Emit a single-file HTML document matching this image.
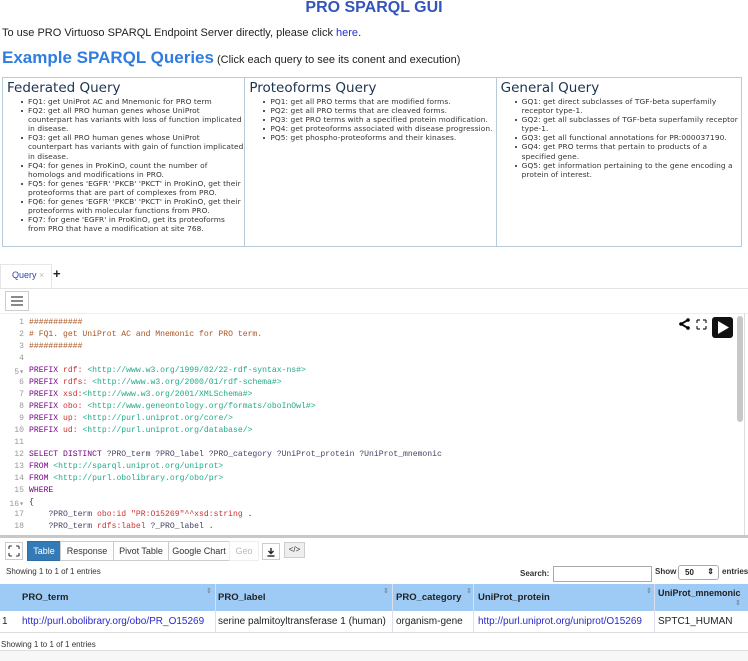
<!DOCTYPE html>
<html><head><meta charset="utf-8">
<style>
*{box-sizing:border-box;margin:0;padding:0}
body{width:748px;height:661px;overflow:hidden;background:#fff;font-family:"Liberation Sans",Arial,sans-serif;color:#222;position:relative}
.a{position:absolute;white-space:nowrap}
h1{position:absolute;left:0;width:748px;top:-1px;text-align:center;font-size:16px;color:#3355bb;font-weight:bold}
.qbox{position:absolute;left:2px;top:77px;width:740px;height:170px;border:1px solid #b7cad9;display:flex}
.col{border-right:1px solid #b7cad9;padding:2px 4px;font-family:"DejaVu Sans",Verdana,sans-serif;overflow:hidden}
.col:last-child{border-right:none}
.col h3{font-weight:normal;font-size:13.5px;color:#1b3350;line-height:16px;margin-bottom:1px}
.col ul{list-style:none;padding-left:21px;font-size:7.4px;letter-spacing:0.08px;line-height:9.1px;color:#333;white-space:nowrap}
.col li{position:relative}
.col li:before{content:"";position:absolute;left:-7px;top:4px;width:2px;height:2px;background:#555}
.code{position:absolute;left:0;top:313px;width:737px;height:223px;font-family:"Liberation Mono",monospace;font-size:8.1px}
.ln{position:absolute;left:0;width:24px;text-align:right;color:#999}
.cl{position:absolute;left:29px;color:#333}
.k{color:#708}.p{color:#c33}.u{color:#2a8}.c{color:#a52}.v{color:#446}.s{color:#c33}
.btn{position:absolute;border:1px solid #ccc;background:#fff;font-size:9px;text-align:center;color:#333}
.th{position:absolute;top:592px;font-size:9.5px;font-weight:bold;white-space:nowrap}
</style></head><body>
<h1>PRO SPARQL GUI</h1>
<div class="a" style="left:2px;top:27px;font-size:11px;color:#222">To use PRO Virtuoso SPARQL Endpoint Server directly, please click <span style="color:#2233cc">here</span>.</div>
<div class="a" style="left:2px;top:48px;font-size:11px"><span style="font-size:17px;font-weight:bold;color:#2f7de1">Example SPARQL Queries</span> (Click each query to see its conent and execution)</div>
<div class="qbox">
<div class="col" style="width:243px"><h3>Federated Query</h3><ul>
<li>FQ1: get UniProt AC and Mnemonic for PRO term</li>
<li>FQ2: get all PRO human genes whose UniProt<br>counterpart has variants with loss of function implicated<br>in disease.</li>
<li>FQ3: get all PRO human genes whose UniProt<br>counterpart has variants with gain of function implicated<br>in disease.</li>
<li>FQ4: for genes in ProKinO, count the number of<br>homologs and modifications in PRO.</li>
<li>FQ5: for genes 'EGFR' 'PKCB' 'PKCT' in ProKinO, get their<br>proteoforms that are part of complexes from PRO.</li>
<li>FQ6: for genes 'EGFR' 'PKCB' 'PKCT' in ProKinO, get their<br>proteoforms with molecular functions from PRO.</li>
<li>FQ7: for gene 'EGFR' in ProKinO, get its proteoforms<br>from PRO that have a modification at site 768.</li></ul></div>
<div class="col" style="width:252px"><h3>Proteoforms Query</h3><ul>
<li>PQ1: get all PRO terms that are modified forms.</li>
<li>PQ2: get all PRO terms that are cleaved forms.</li>
<li>PQ3: get PRO terms with a specified protein modification.</li>
<li>PQ4: get proteoforms associated with disease progression.</li>
<li>PQ5: get phospho-proteoforms and their kinases.</li></ul></div>
<div class="col" style="width:245px"><h3>General Query</h3><ul>
<li>GQ1: get direct subclasses of TGF-beta superfamily<br>receptor type-1.</li>
<li>GQ2: get all subclasses of TGF-beta superfamily receptor<br>type-1.</li>
<li>GQ3: get all functional annotations for PR:000037190.</li>
<li>GQ4: get PRO terms that pertain to products of a<br>specified gene.</li>
<li>GQ5: get information pertaining to the gene encoding a<br>protein of interest.</li></ul></div>
</div>
<div class="a" style="left:0;top:264px;width:52px;height:25px;border:1px solid #e6e6e6;border-bottom:none;background:#fff"></div>
<div class="a" style="left:12px;top:270px;font-size:9px;color:#3344aa">Query <span style="color:#bbb">×</span></div>
<div class="a" style="left:53px;top:266px;font-size:13px;font-weight:bold">+</div>
<div class="a" style="left:0;top:288px;width:748px;height:1px;background:#e3e3e3"></div>
<div class="btn" style="left:5px;top:291px;width:24px;height:20px"><svg width="14" height="10" viewBox="0 0 14 10" style="margin-top:4px"><path d="M1 1H13M1 5H13M1 9H13" stroke="#444" stroke-width="1.3"/></svg></div>
<div class="a" style="left:0;top:313px;width:748px;height:1px;background:#eee"></div>
<div class="code">
<div class="ln" style="top:5px">1</div><div class="cl c" style="top:5px">###########</div>
<div class="ln" style="top:17px">2</div><div class="cl c" style="top:17px"># FQ1. get UniProt AC and Mnemonic for PRO term.</div>
<div class="ln" style="top:29px">3</div><div class="cl c" style="top:29px">###########</div>
<div class="ln" style="top:41px">4</div>
<div class="ln" style="top:53px">5▾</div><div class="cl" style="top:53px"><span class="k">PREFIX</span> <span class="p">rdf:</span> <span class="u">&lt;http://www.w3.org/1999/02/22-rdf-syntax-ns#&gt;</span></div>
<div class="ln" style="top:65px">6</div><div class="cl" style="top:65px"><span class="k">PREFIX</span> <span class="p">rdfs:</span> <span class="u">&lt;http://www.w3.org/2000/01/rdf-schema#&gt;</span></div>
<div class="ln" style="top:77px">7</div><div class="cl" style="top:77px"><span class="k">PREFIX</span> <span class="p">xsd:</span><span class="u">&lt;http://www.w3.org/2001/XMLSchema#&gt;</span></div>
<div class="ln" style="top:89px">8</div><div class="cl" style="top:89px"><span class="k">PREFIX</span> <span class="p">obo:</span> <span class="u">&lt;http://www.geneontology.org/formats/oboInOwl#&gt;</span></div>
<div class="ln" style="top:101px">9</div><div class="cl" style="top:101px"><span class="k">PREFIX</span> <span class="p">up:</span> <span class="u">&lt;http://purl.uniprot.org/core/&gt;</span></div>
<div class="ln" style="top:113px">10</div><div class="cl" style="top:113px"><span class="k">PREFIX</span> <span class="p">ud:</span> <span class="u">&lt;http://purl.uniprot.org/database/&gt;</span></div>
<div class="ln" style="top:125px">11</div>
<div class="ln" style="top:137px">12</div><div class="cl" style="top:137px"><span class="k">SELECT DISTINCT</span> <span class="v">?PRO_term ?PRO_label ?PRO_category ?UniProt_protein ?UniProt_mnemonic</span></div>
<div class="ln" style="top:149px">13</div><div class="cl" style="top:149px"><span class="k">FROM</span> <span class="u">&lt;http://sparql.uniprot.org/uniprot&gt;</span></div>
<div class="ln" style="top:161px">14</div><div class="cl" style="top:161px"><span class="k">FROM</span> <span class="u">&lt;http://purl.obolibrary.org/obo/pr&gt;</span></div>
<div class="ln" style="top:173px">15</div><div class="cl k" style="top:173px">WHERE</div>
<div class="ln" style="top:185px">16▾</div><div class="cl" style="top:185px">{</div>
<div class="ln" style="top:197px">17</div><div class="cl" style="top:197px">&nbsp;&nbsp;&nbsp;&nbsp;<span class="v">?PRO_term</span> <span class="p">obo:id</span> <span class="s">"PR:O15269"^^xsd:string</span> .</div>
<div class="ln" style="top:209px">18</div><div class="cl" style="top:209px">&nbsp;&nbsp;&nbsp;&nbsp;<span class="v">?PRO_term</span> <span class="p">rdfs:label</span> <span class="v">?_PRO_label</span> .</div>
</div>
<svg class="a" style="left:676px;top:317px" width="60" height="22" viewBox="0 0 60 22">
<path d="M12 3L5 7L12 11" stroke="#111" stroke-width="2" fill="none"/><circle cx="12" cy="3" r="1.8"/><circle cx="5" cy="7" r="1.8"/><circle cx="12" cy="11" r="1.8"/>
<path d="M21 3h3M21 3v3M30 3h-3M30 3v3M21 12h3M21 12v-3M30 12h-3M30 12v-3" stroke="#222" stroke-width="1.2" fill="none"/>
<rect x="36" y="0" width="21" height="21" rx="3" fill="#111"/><path d="M42 4L53 10.5L42 17Z" fill="#fff"/>
</svg>
<div class="a" style="left:737px;top:316px;width:6px;height:106px;background:#c8c8c8;border-radius:3px"></div>
<div class="a" style="left:744px;top:313px;width:1px;height:223px;background:#ddd"></div>
<div class="a" style="left:0;top:535px;width:748px;height:3px;background:#c8c8c8"></div>
<div class="btn" style="left:5px;top:542px;width:18px;height:18px"><svg width="12" height="12" viewBox="0 0 12 12" style="margin-top:2px"><path d="M1 1h3M1 1v3M11 1h-3M11 1v3M1 11h3M1 11v-3M11 11h-3M11 11v-3" stroke="#333" stroke-width="1.1" fill="none"/></svg></div>
<div class="btn" style="left:27px;top:541px;width:34px;height:20px;background:#337ab7;border-color:#2e6da4;color:#fff;line-height:18px">Table</div>
<div class="btn" style="left:60px;top:541px;width:54px;height:20px;line-height:18px">Response</div>
<div class="btn" style="left:113px;top:541px;width:56px;height:20px;line-height:18px">Pivot Table</div>
<div class="btn" style="left:168px;top:541px;width:62px;height:20px;line-height:18px">Google Chart</div>
<div class="btn" style="left:229px;top:541px;width:30px;height:20px;line-height:18px;color:#bbb;border-color:#eee">Geo</div>
<div class="btn" style="left:262px;top:543px;width:18px;height:17px"><svg width="10" height="10" viewBox="0 0 10 10" style="margin-top:3px"><path d="M5 1V6M2.5 4L5 6.5L7.5 4" stroke="#222" stroke-width="1.4" fill="none"/><path d="M1.5 9H8.5" stroke="#222" stroke-width="1.4"/></svg></div>
<div class="btn" style="left:284px;top:542px;width:21px;height:16px;line-height:14px;font-size:8px;background:#eee">&lt;/&gt;</div>
<div class="a" style="left:6px;top:567px;font-size:8px;color:#333">Showing 1 to 1 of 1 entries</div>
<div class="a" style="left:520px;top:569px;font-size:8px;font-weight:bold;color:#333">Search:</div>
<div class="a" style="left:553px;top:566px;width:99px;height:16px;border:1px solid #aaa"></div>
<div class="a" style="left:655px;top:567px;font-size:8px;font-weight:bold;color:#333">Show</div>
<div class="a" style="left:678px;top:565px;width:41px;height:15px;border:1px solid #aaa;border-radius:3px;font-size:8px;padding:2px 6px;font-weight:bold">50<span style="position:absolute;right:4px;top:1px">⇕</span></div>
<div class="a" style="left:722px;top:567px;font-size:8px;font-weight:bold;color:#333">entries</div>
<div class="a" style="left:0;top:584px;width:748px;height:27px;background:#9ecbf5"></div>
<div class="th" style="left:22px">PRO_term</div>
<div class="th" style="left:218px">PRO_label</div>
<div class="th" style="left:396px">PRO_category</div>
<div class="th" style="left:478px">UniProt_protein</div>
<div class="th" style="left:658px;top:588px;font-size:9px">UniProt_mnemonic</div>
<div class="a" style="left:206px;top:587px;font-size:7px;color:#777">⇕</div>
<div class="a" style="left:383px;top:587px;font-size:7px;color:#777">⇕</div>
<div class="a" style="left:466px;top:587px;font-size:7px;color:#777">⇕</div>
<div class="a" style="left:646px;top:587px;font-size:7px;color:#777">⇕</div>
<div class="a" style="left:735px;top:599px;font-size:7px;color:#777">⇕</div>
<div class="a" style="left:215px;top:584px;width:1px;height:48px;background:#dde"></div>
<div class="a" style="left:392px;top:584px;width:1px;height:48px;background:#dde"></div>
<div class="a" style="left:473px;top:584px;width:1px;height:48px;background:#dde"></div>
<div class="a" style="left:654px;top:584px;width:1px;height:48px;background:#dde"></div>
<div class="a" style="left:2px;top:616px;font-size:10px">1</div>
<div class="a" style="left:22px;top:616px;font-size:10px;color:#2a2acc">http://purl.obolibrary.org/obo/PR_O15269</div>
<div class="a" style="left:218px;top:616px;font-size:10px">serine palmitoyltransferase 1 (human)</div>
<div class="a" style="left:396px;top:616px;font-size:10px">organism-gene</div>
<div class="a" style="left:478px;top:616px;font-size:10px;color:#2a2acc">http://purl.uniprot.org/uniprot/O15269</div>
<div class="a" style="left:658px;top:616px;font-size:10px">SPTC1_HUMAN</div>
<div class="a" style="left:0;top:632px;width:748px;height:1px;background:#ddd"></div>
<div class="a" style="left:1px;top:640px;font-size:8px;color:#333">Showing 1 to 1 of 1 entries</div>
<div class="a" style="left:0;top:650px;width:748px;height:1px;background:#ddd"></div>
<div class="a" style="left:0;top:651px;width:748px;height:10px;background:#f7f7f7"></div>
</body></html>
